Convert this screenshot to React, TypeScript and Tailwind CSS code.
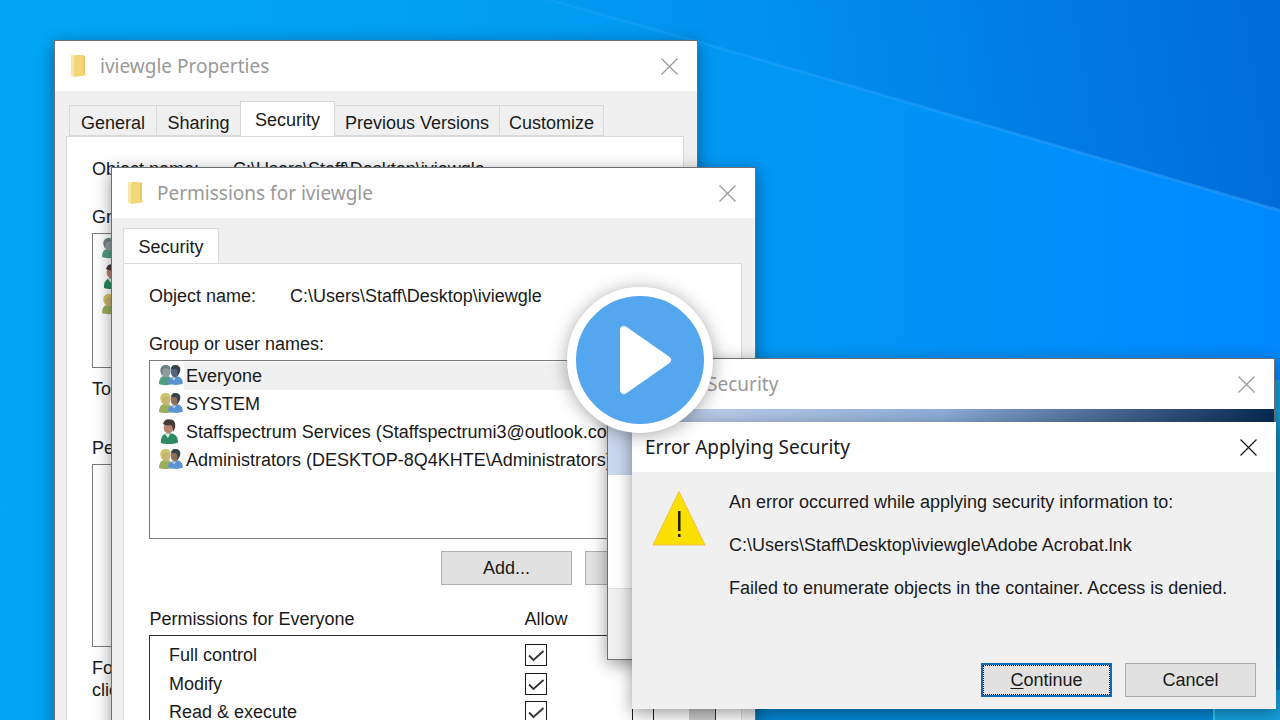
import React from "react";
import clsx from "clsx";

const FolderIcon = () => (
  <svg width="18" height="24" viewBox="0 0 18 24" aria-hidden="true">
    <path d="M1 1h12v21H1z" fill="#efd47c" />
    <path d="M1 1h4v22l-4-1z" fill="#f9e7a6" />
    <path d="M4 3l10-2v17l3 3-13 2z" fill="#f2d777" />
    <path d="M13 2l2 0v17l-2 1z" fill="#e8c865" />
  </svg>
);

const CloseIcon = () => (
  <svg width="17" height="17" viewBox="0 0 17 17" aria-hidden="true">
    <path d="M.5.5l16 16M16.5.5l-16 16" stroke="currentColor" strokeWidth="1.2" fill="none" />
  </svg>
);

type UserKind = "everyone" | "group" | "single";

const UserIcon = ({ kind }: { kind: UserKind }) => {
  if (kind === "single") {
    return (
      <svg width="26" height="26" viewBox="0 0 26 26" aria-hidden="true">
        <path d="M3 24c-.5-6 2-9 6-9.500h5c4 1 6 4 6 9-4 2-13 2-17 .5z" fill="#2c8b63" />
        <path d="M7 15l3 4 2-4z" fill="#dff0e6" />
        <ellipse cx="10.500" cy="8.500" rx="4.800" ry="6" fill="#b98570" />
        <path d="M5 5C6 1 9-.5 12 .6c4-.4 6 3 5 8.400l-2 4c0-4-.5-6-2-7-3 1-6 0-8-1z" fill="#453a36" />
      </svg>
    );
  }
  const everyone = kind === "everyone";
  return (
    <svg width="26" height="26" viewBox="0 0 26 26" aria-hidden="true">
      <path d="M1 21c0-5 2-7.500 5-8h4c3 1 4 4 4 8-3 1.500-10 1.500-13 0z" fill={everyone ? "#539b83" : "#9aae5e"} />
      <ellipse cx="8" cy="8.500" rx="4.500" ry="6" fill={everyone ? "#8f9c9e" : "#c7b277"} />
      <path
        d="M2.500 9C1.500 4 5 1.600 8 2c4 0 5 3 4.500 5.500C10 5 6 5 5 7l-1 6z"
        fill={everyone ? "#6d8286" : "#d2c463"}
      />
      <path d="M10 20c0-3 3-6 6.500-6.500h4c3 .8 4 3.500 4.500 7-4 2-11 2-15-.5z" fill="#5b92d0" />
      <path d="M14 14.500l2 3 2-3z" fill="#c9dcf2" />
      <ellipse cx="17" cy="8.500" rx="4.200" ry="6" fill={everyone ? "#52677c" : "#8c6c5a"} />
      <path d="M13 6c0-3 2.500-4.500 5-4 4 .2 5 3.500 4 7l-2.500 4c.2-4-.5-6.500-2-7z" fill="#38424c" />
    </svg>
  );
};

const WarningIcon = () => (
  <svg width="54" height="56" viewBox="0 0 54 56" aria-hidden="true">
    <path d="M27 .5L53 54H1z" fill="#fce000" stroke="#efc04a" strokeWidth="1" />
    <path d="M26 20h2.500v20H26zM26 43h2.500v3H26z" fill="#1c1a00" />
  </svg>
);

const Wallpaper = () => (
  <svg className="absolute inset-0 h-full w-full" viewBox="0 0 1280 720" preserveAspectRatio="none" aria-hidden="true">
    <defs>
      <linearGradient id="sky" gradientUnits="userSpaceOnUse" x1="0" y1="200" x2="1280" y2="0">
        <stop offset="0" stopColor="#02a6f4" />
        <stop offset="0.400" stopColor="#029df3" />
        <stop offset="0.600" stopColor="#0191ee" />
        <stop offset="0.800" stopColor="#007de6" />
        <stop offset="1" stopColor="#006ad9" />
      </linearGradient>
      <linearGradient id="beam" x1="0" y1="0" x2="1" y2="0">
        <stop offset="0" stopColor="#02a6f4" />
        <stop offset="0.400" stopColor="#029df3" />
        <stop offset="0.650" stopColor="#0196f5" />
        <stop offset="1" stopColor="#0089ff" />
      </linearGradient>
      <linearGradient id="ray" gradientUnits="userSpaceOnUse" x1="548" y1="0" x2="1280" y2="0">
        <stop offset="0" stopColor="#2aa8fa" stopOpacity="0.300" />
        <stop offset="1" stopColor="#2e9dfb" stopOpacity="0.600" />
      </linearGradient>
    </defs>
    <rect width="1280" height="720" fill="url(#sky)" />
    <path d="M0 0H548L697 41 1280 211V720H0z" fill="url(#beam)" />
    <path d="M546 0h8L697 40 1280 209v3L697 43z" fill="url(#ray)" />
    <path d="M700 700h514v20H700z" fill="#0489d8" />
    <path d="M1214 380h66v340h-66z" fill="#16a2e0" />
    <path d="M1214 560h66v130h-66z" fill="#0a7cc0" />
    <path d="M1213 700h2v20h-2z" fill="#35cdf2" />
  </svg>
);

interface WindowProps {
  title: string;
  className: string;
  active?: boolean;
  icon?: boolean;
  children: React.ReactNode;
}

const Window = ({ title, className, active, icon, children }: WindowProps) => (
  <section
    aria-label={title}
    className={clsx(
      "absolute flex flex-col bg-[#f0f0f0] shadow-[0_4px_16px_rgba(0,0,0,0.4)]",
      !active && "border border-[#6b7075]",
      className
    )}
  >
    <header
      className={clsx(
        "flex h-[50px] shrink-0 items-center bg-white pr-[19px]",
        icon ? "pl-[15px]" : "pl-[13px]",
        active ? "text-[#1a1a1a]" : "text-[#999999]"
      )}
    >
      {icon && (
        <span className="mr-3 shrink-0">
          <FolderIcon />
        </span>
      )}
      <h2 className="grow whitespace-nowrap font-['Noto_Sans',sans-serif] text-[19px]">{title}</h2>
      <button type="button" aria-label="Close">
        <CloseIcon />
      </button>
    </header>
    {children}
  </section>
);

const Tab = ({ label, selected, width }: { label: string; selected?: boolean; width: string }) => (
  <button
    type="button"
    role="tab"
    aria-selected={!!selected}
    className={clsx(
      "-ml-px whitespace-nowrap border border-[#d9d9d9]",
      selected ? "-mb-px h-9 border-b-0 bg-white" : "h-[31px] bg-[#f0f0f0] pt-1",
      width
    )}
  >
    {label}
  </button>
);

const Panel = ({ children }: { children: React.ReactNode }) => (
  <div className="ml-[11px] mr-[13px] grow border border-[#d9d9d9] bg-white px-[25px] pt-[21px]">
    {children}
  </div>
);

const ObjectName = () => (
  <dl className="flex">
    <dt className="w-[141px] shrink-0">Object name:</dt>
    <dd>C:\Users\Staff\Desktop\iviewgle</dd>
  </dl>
);

interface User {
  name: string;
  kind: UserKind;
  selected?: boolean;
}

const UserList = ({ users, height }: { users: User[]; height: string }) => (
  <ul className={clsx("mt-[5px] overflow-hidden border border-[#7a7a7a] pl-2 pt-px", height)}>
    {users.map((user) => (
      <li key={user.name} className="flex h-7 items-center whitespace-nowrap">
        <UserIcon kind={user.kind} />
        <span className={clsx("grow pl-[2px] leading-7", user.selected && "bg-[#f0f0f0]")}>{user.name}</span>
      </li>
    ))}
  </ul>
);

const Check = ({ label, checked }: { label: string; checked: boolean }) => (
  <span className="grid size-[22px]">
    <input
      type="checkbox"
      aria-label={label}
      defaultChecked={checked}
      className="col-start-1 row-start-1 size-[22px] appearance-none border border-[#1a1a1a] bg-white"
    />
    {checked && (
      <svg className="pointer-events-none col-start-1 row-start-1" width="22" height="22" viewBox="0 0 22 22" aria-hidden="true">
        <path d="M4 11.500l4.500 4.500L18.500 7" fill="none" stroke="#333" strokeWidth="1.800" />
      </svg>
    )}
  </span>
);

const staff: User = { name: "Staffspectrum Services (Staffspectrumi3@outlook.com)", kind: "single" };
const admins: User = { name: "Administrators (DESKTOP-8Q4KHTE\\Administrators)", kind: "group" };

const permissionUsers: User[] = [
  { name: "Everyone", kind: "everyone", selected: true },
  { name: "SYSTEM", kind: "group" },
  staff,
  admins,
];

const permissions = ["Full control", "Modify", "Read & execute"];

const PermissionsTable = () => (
  <table className="mt-[23px] w-full table-fixed border-collapse text-left">
    <thead>
      <tr className="h-[27px] align-top">
        <th className="font-normal">Permissions for Everyone</th>
        <th className="w-[107px] font-normal">Allow</th>
        <th className="w-[57px] font-normal">Deny</th>
        <th className="w-[27px]" />
      </tr>
    </thead>
    <tbody className="border border-[#333333]">
      {permissions.map((name, i) => (
        <tr key={name} className={i === 0 ? "h-[34px]" : "h-[29px]"}>
          <td className={clsx("pl-[19px]", i === 0 && "pt-[6px]")}>{name}</td>
          <td className={clsx(i === 0 && "pt-[6px]")}>
            <Check label={`Allow ${name}`} checked />
          </td>
          <td className={clsx(i === 0 && "pt-[6px]")}>
            <Check label={`Deny ${name}`} checked={false} />
          </td>
          {i === 0 && <td rowSpan={permissions.length} className="bg-[#cdcdcd]" />}
        </tr>
      ))}
    </tbody>
  </table>
);

const App: React.FC = () => {
  return (
    <main className="relative h-screen w-full overflow-hidden bg-[#0199f5] font-['Liberation_Sans',Arial,sans-serif] text-lg leading-[22px] text-[#1a1a1a]">
      <Wallpaper />

      {/* folder properties */}
      <Window title="iviewgle Properties" icon className="left-[54px] top-10 -bottom-10 w-[644px]">
        <div role="tablist" className="flex items-end pl-[15px] pt-[10px]">
          <Tab label="General" width="w-[88px]" />
          <Tab label="Sharing" width="w-[85px]" />
          <Tab label="Security" width="w-[95px]" selected />
          <Tab label="Previous Versions" width="w-[166px]" />
          <Tab label="Customize" width="w-[105px]" />
        </div>
        <Panel>
          <ObjectName />
          <p className="mt-[26px]">Group or user names:</p>
          <UserList users={[{ name: "Everyone", kind: "everyone" }, staff, admins]} height="h-[135px]" />
          <p className="mt-[10px]">To change permissions, click Edit.</p>
          <p className="mt-[37px]">Permissions for Everyone</p>
          <div className="mt-[5px] h-[183px] border border-[#7a7a7a]" />
          <p className="mt-[10px] w-[400px]">For special permissions or advanced settings, click Advanced.</p>
        </Panel>
      </Window>

      {/* edit permissions */}
      <Window title="Permissions for iviewgle" icon className="left-[111px] top-[167px] -bottom-10 w-[645px]">
        <div role="tablist" className="flex items-end pl-3 pt-[10px]">
          <Tab label="Security" width="w-[96px]" selected />
        </div>
        <Panel>
          <ObjectName />
          <p className="mt-[26px]">Group or user names:</p>
          <UserList users={permissionUsers} height="h-[179px]" />
          <div className="mt-3 flex justify-end gap-[13px]">
            <button type="button" className="h-[34px] w-[131px] border border-[#adadad] bg-[#e1e1e1]">
              Add...
            </button>
            <button type="button" className="h-[34px] w-[131px] border border-[#adadad] bg-[#e1e1e1]">
              Remove
            </button>
          </div>
          <PermissionsTable />
        </Panel>
      </Window>

      {/* progress window behind the error */}
      <Window title="Windows Security" className="left-[607px] top-[358px] w-[668px]">
        <div className="h-[66px] bg-linear-to-r from-[#cbd8ee] via-[#8eadd8] to-[#062a52]" />
        <div className="h-[114px] border-b border-[#dfdfdf] bg-white" />
        <div className="h-[70px]" />
      </Window>

      <Window title="Error Applying Security" active className="left-[632px] top-[422px] w-[644px]">
        <div className="flex gap-[23px] pl-5 pt-[19px]">
          <WarningIcon />
          <div className="flex flex-col gap-[21px] whitespace-nowrap">
            <p>An error occurred while applying security information to:</p>
            <p>C:\Users\Staff\Desktop\iviewgle\Adobe Acrobat.lnk</p>
            <p>Failed to enumerate objects in the container. Access is denied.</p>
          </div>
        </div>
        <div className="flex justify-end gap-[13px] pb-3 pr-5 pt-16">
          <button type="button" className="h-[34px] w-[131px] border-2 border-[#0f6ab4] bg-[#e1e1e1]">
            <span className="flex h-full items-center justify-center border border-dotted border-black">
              <span>
                <u className="underline-offset-2">C</u>ontinue
              </span>
            </span>
          </button>
          <button type="button" className="h-[34px] w-[131px] border border-[#adadad] bg-[#e1e1e1]">
            Cancel
          </button>
        </div>
      </Window>

      {/* play overlay */}
      <div className="pointer-events-none absolute inset-0 flex items-center justify-center">
        <button
          type="button"
          aria-label="Play"
          className="pointer-events-auto flex size-[146px] items-center justify-center rounded-full border-[9px] border-white bg-[#54a7ee] shadow-[0_2px_18px_rgba(0,0,0,0.35)]"
        >
          <svg width="64" height="76" viewBox="0 0 64 76" aria-hidden="true">
            <path d="M16 8L59 38 16 68z" fill="#fff" stroke="#fff" strokeWidth="8" strokeLinejoin="round" />
          </svg>
        </button>
      </div>
    </main>
  );
};

export default App;
